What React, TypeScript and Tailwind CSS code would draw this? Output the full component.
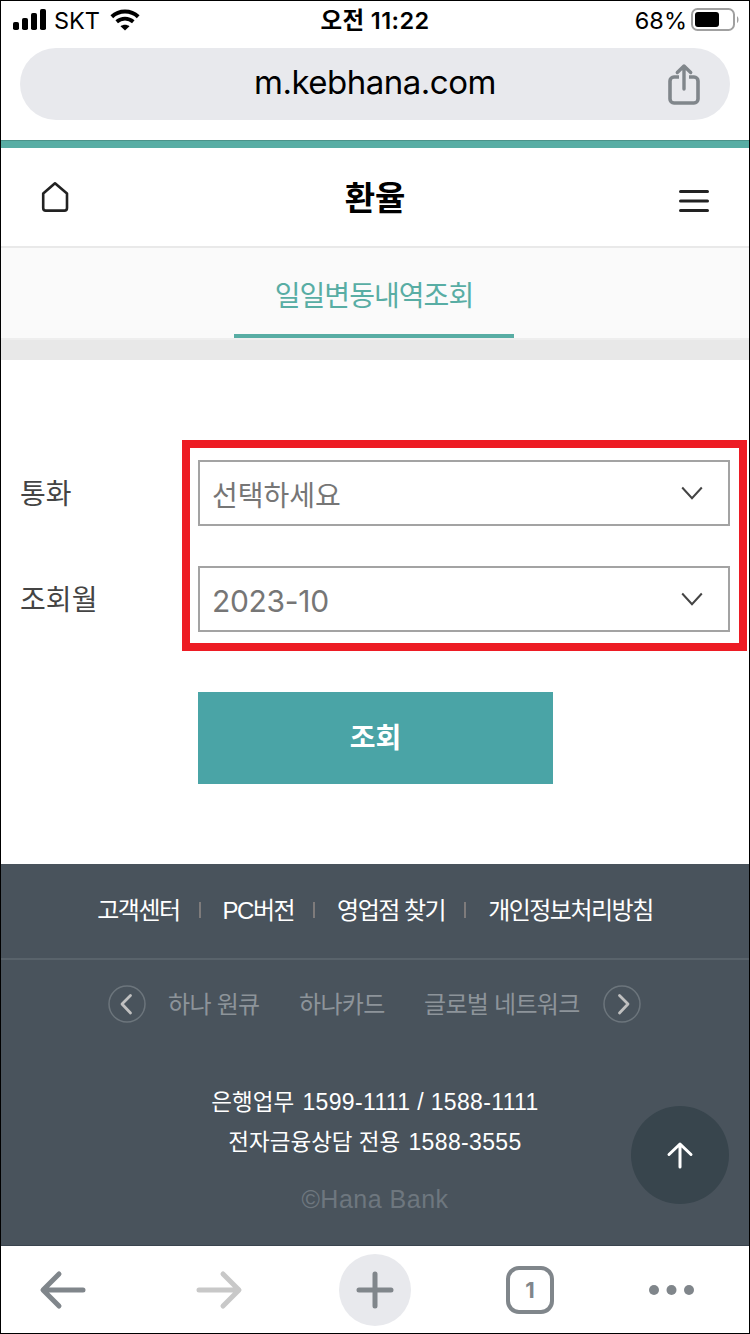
import type { ReactNode } from "react";

const footerLinks = ["고객센터", "PC버전", "영업점 찾기", "개인정보처리방침"];

type SelectRowProps = {
  label: string;
  children: ReactNode;
};

function SelectRow({ label, children }: SelectRowProps) {
  return (
    <div className="flex h-[66px] items-center">
      <span className="w-[178px] pt-[3px] text-[28px] leading-none tracking-[0.1px] text-[#444]">{label}</span>
      <button
        type="button"
        className="flex h-full flex-1 items-center justify-between border-2 border-[#a3a3a3] pr-[24px] pl-[12px] text-[#767676]"
      >
        {children}
        <svg width="24" height="16" viewBox="0 0 24 16" fill="none" stroke="#444" strokeWidth="2">
          <path d="M2.2 2.5 12 13.2 21.8 2.5" />
        </svg>
      </button>
    </div>
  );
}

function StatusBar() {
  return (
    <div className="grid h-[47px] grid-cols-3 items-start px-3 pt-[7px] font-['Inter','Noto_Sans_CJK_KR',sans-serif] text-black">
      <div className="flex h-[24px] items-center">
        <svg className="-mt-[2px]" width="34" height="22" viewBox="0 0 34 22">
          <rect x="0" y="14" width="6" height="8" rx="1.8" />
          <rect x="9" y="10" width="6" height="12" rx="1.8" />
          <rect x="18" y="5" width="6" height="17" rx="1.8" />
          <rect x="27" y="1" width="6" height="21" rx="1.8" />
        </svg>
        <span className="ml-[7px] pt-[2px] text-[23.5px] leading-6">SKT</span>
        <svg className="ml-[10px]" width="30" height="22" viewBox="0 0 30 22" fill="none" stroke="#000">
          <path d="M1.8 7.7C9.2.8 20.8.8 28.2 7.7" strokeWidth="4" />
          <path d="M6.7 12.7c4.8-4.2 11.8-4.2 16.6 0" strokeWidth="3.8" />
          <path d="M10.5 17.2c2.7-2 6.3-2 9 0L15 21.6z" fill="#000" stroke="none" />
        </svg>
      </div>
      <span className="pt-[1px] text-center text-[23.5px] leading-6 font-semibold tracking-[0.4px]">오전 11:22</span>
      <div className="flex h-[24px] items-center justify-end">
        <span className="mr-[4px] pt-[2px] text-[23.5px] leading-6">68%</span>
        <svg className="-mr-[3px]" width="49" height="24" viewBox="0 0 49 24">
          <rect x="1" y="1" width="42" height="21" rx="5.5" fill="none" stroke="#a0a0a0" strokeWidth="2" />
          <rect x="4" y="4" width="24" height="15" rx="3" />
          <path d="M46 8.2c2 1 2 5.8 0 6.8z" fill="#a0a0a0" />
        </svg>
      </div>
    </div>
  );
}

function AddressBar() {
  return (
    <div className="mx-[19px] flex h-[72px] items-center rounded-full bg-[#e8e9ed] pr-[29px] pl-[63px] font-['Inter',sans-serif]">
      <span className="flex-1 pb-[4px] text-center text-[33px] leading-10 tracking-[-0.5px] text-black">m.kebhana.com</span>
      <svg width="34" height="42" viewBox="0 0 34 42" fill="none" stroke="#80868b" strokeWidth="3.6">
        <path d="M12 14H7a4 4 0 0 0-4 4v18a4 4 0 0 0 4 4h20a4 4 0 0 0 4-4V18a4 4 0 0 0-4-4h-5" />
        <path d="M17 26V3M10.3 9.5 17 3l6.7 6.5" strokeWidth="3.4" strokeLinecap="round" strokeLinejoin="round" />
      </svg>
    </div>
  );
}

function PageHeader() {
  return (
    <header className="flex h-[100px] items-center justify-between border-b-2 border-[#e9e9e9] pr-[39px] pl-[40px]">
      <svg className="-mt-[1px]" width="29" height="32" viewBox="0 0 29 32" fill="none" stroke="#222" strokeWidth="2.6">
        <path
          d="M2.2 12.6 14 2.3 26 12.6V27a2.6 2.6 0 0 1-2.6 2.6H4.8A2.6 2.6 0 0 1 2.2 27z"
          strokeLinejoin="round"
        />
      </svg>
      <h1 className="pt-[3px] pl-[1px] text-[33px] leading-10 font-bold text-black">환율</h1>
      <svg className="mt-[7px]" width="31" height="24" viewBox="0 0 31 24" stroke="#222" strokeWidth="3" strokeLinecap="round">
        <path d="M1.5 2.500h27M1.5 12h27M1.5 21.500h27" />
      </svg>
    </header>
  );
}

function CircleArrow({ d }: { d: string }) {
  return (
    <svg width="38" height="38" viewBox="0 0 38 38" fill="none">
      <circle cx="19" cy="19" r="18" stroke="#6c757c" strokeWidth="1.5" />
      <path d={d} stroke="#c0c0c0" strokeWidth="2.8" strokeLinecap="round" strokeLinejoin="round" />
    </svg>
  );
}

function PhoneNumber({ children }: { children: ReactNode }) {
  return <span className="ml-[2px] text-[23px] tracking-[0.35px]">{children}</span>;
}

function SiteFooter() {
  return (
    <footer className="relative h-[382px] border-b border-[#3a444e] bg-[#49535c] text-white">
      <nav className="flex h-[96px] items-center justify-center border-b-2 border-[#59636b]">
        {footerLinks.map((link, index) => (
          <div key={link} className="flex items-center">
            {index > 0 ? <span className="mr-[22px] mb-[2px] ml-[19px] h-4 w-[2px] bg-[#7e7b7b]" /> : null}
            <span className="text-[24px] leading-8 tracking-[-1.5px]">{link}</span>
          </div>
        ))}
      </nav>
      <div className="flex h-[88px] items-center pl-[107px] text-[24px] leading-8 tracking-[-0.7px] text-[#8d949a]">
        <CircleArrow d="M22.5 10.5 14 19l8.5 9" />
        <span className="ml-[22px] w-[131px] pt-[2px]">하나 원큐</span>
        <span className="w-[125px] pt-[2px]">하나카드</span>
        <span className="w-[179px] pt-[2px]">글로벌 네트워크</span>
        <CircleArrow d="M16.5 10.5 25 19l-8.5 9" />
      </div>
      <div className="mt-[34px] text-center text-[22.5px] leading-10">
        <p>
          은행업무 <PhoneNumber>1599-1111 / 1588-1111</PhoneNumber>
        </p>
        <p className="-mt-[1px]">
          전자금융상담 전용 <PhoneNumber>1588-3555</PhoneNumber>
        </p>
      </div>
      <p className="mt-[18px] text-center text-[25px] leading-9 tracking-[0.5px] text-[#6e777f]">©Hana Bank</p>
      <button
        type="button"
        aria-label="맨 위로"
        className="absolute top-[242px] right-[20px] flex size-[98px] items-center justify-center rounded-full bg-[#38454d]"
      >
        <svg width="28" height="28" viewBox="0 0 28 28" fill="none" stroke="#fff" strokeWidth="3" strokeLinecap="round" strokeLinejoin="round">
          <path d="M14 26V3M3 13.5 14 3l11 10.5" />
        </svg>
      </button>
    </footer>
  );
}

function BrowserToolbar() {
  return (
    <div className="flex h-[87px] items-center bg-white pl-[38px] text-[#80868b]">
      <svg width="48" height="40" viewBox="0 0 48 40" fill="none" stroke="currentColor" strokeWidth="5" strokeLinecap="round" strokeLinejoin="round">
        <path d="M44 20H5M20 4 4 20l16 16" />
      </svg>
      <svg className="ml-[108px]" width="48" height="40" viewBox="0 0 48 40" fill="none" stroke="#c8c8c8" strokeWidth="5" strokeLinecap="round" strokeLinejoin="round">
        <path d="M4 20h39M28 4l16 16-16 16" />
      </svg>
      <div className="ml-[96px] flex size-[72px] items-center justify-center rounded-full bg-[#e8e9ed]">
        <svg width="38" height="38" viewBox="0 0 38 38" stroke="currentColor" strokeWidth="5" strokeLinecap="round">
          <path d="M3 19h32M19 3v32" />
        </svg>
      </div>
      <div className="ml-[95px] flex size-[48px] items-center justify-center rounded-[13px] border-4 border-[#80868b] pt-[1px] font-['Inter',sans-serif] text-[22px] leading-none font-bold">
        1
      </div>
      <svg className="ml-[94px]" width="48" height="12" viewBox="0 0 48 12" fill="currentColor">
        <circle cx="6" cy="6" r="5" />
        <circle cx="23.5" cy="6" r="5" />
        <circle cx="41" cy="6" r="5" />
      </svg>
    </div>
  );
}

export default function App() {
  return (
    <div className="h-[1334px] w-[750px] overflow-hidden border border-black bg-white font-['Liberation_Sans','Noto_Sans_CJK_KR',sans-serif]">
      <StatusBar />
      <AddressBar />
      <div className="mt-5 h-2 border-t border-[#4b9289] bg-[#58ada4]" />
      <PageHeader />
      <div className="flex h-[90px] justify-center bg-[#fafafa]">
        <div className="mr-[2px] flex w-[280px] items-center justify-center border-b-4 border-[#58ada4] pt-[11px] text-[28px] tracking-[-0.95px] text-[#58ada4]">
          일일변동내역조회
        </div>
      </div>
      <div className="h-[22px] border-t-2 border-[#eee] bg-[#e8e8e8]" />
      <main className="relative h-[504px] pt-[100px] pr-[19px] pl-[19px]">
        <div className="flex flex-col gap-10">
          <SelectRow label="통화">
            <span className="pt-[7px] text-[28px] leading-9">선택하세요</span>
          </SelectRow>
          <SelectRow label="조회월">
            <span className="pt-[4px] font-['Inter',sans-serif] text-[30px] leading-9 tracking-[-0.3px]">2023-10</span>
          </SelectRow>
        </div>
        <button
          type="button"
          className="mt-[60px] ml-[178px] flex h-[92px] w-[355px] items-center justify-center bg-[#4aa4a6] pt-[2px] text-[28px] font-bold text-white"
        >
          조회
        </button>
        <div className="pointer-events-none absolute top-[80px] left-[181px] h-[211px] w-[565px] border-8 border-[#ed1c24]" />
      </main>
      <SiteFooter />
      <BrowserToolbar />
    </div>
  );
}
